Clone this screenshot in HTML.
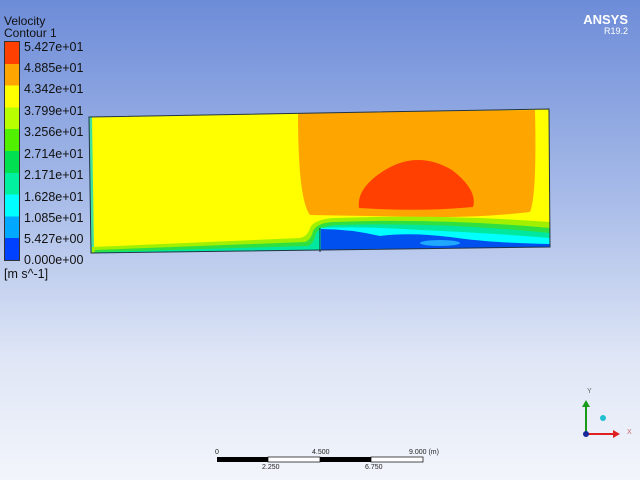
<!DOCTYPE html>
<html><head><style>
body{margin:0;width:640px;height:480px;overflow:hidden;background:linear-gradient(#6d8cd8 0%,#a6bae8 40%,#dfe6f6 75%,#f2f5fb 100%);font-family:"Liberation Sans",sans-serif;position:relative}
.t{position:absolute;color:#111;font-size:12px;line-height:12px}
.l{position:absolute;left:24px;font-size:12.5px;color:#111}
</style></head><body>
<div class="t" style="left:4px;top:15px">Velocity</div>
<div class="t" style="left:4px;top:27px">Contour 1</div>
<div style="position:absolute;left:4px;top:41px;width:14px;height:218px;border:1px solid #333;background:linear-gradient(#ff4000 0,#ff4000 10%,#ffa500 10%,#ffa500 20%,#ffff00 20%,#ffff00 30%,#b8ff00 30%,#b8ff00 40%,#50f000 40%,#50f000 50%,#00e050 50%,#00e050 60%,#00f0a0 60%,#00f0a0 70%,#00ffff 70%,#00ffff 80%,#00a8ff 80%,#00a8ff 90%,#0040ff 90%)"></div>
<div class="l" style="top:40px">5.427e+01</div>
<div class="l" style="top:61px">4.885e+01</div>
<div class="l" style="top:82px">4.342e+01</div>
<div class="l" style="top:104px">3.799e+01</div>
<div class="l" style="top:125px">3.256e+01</div>
<div class="l" style="top:147px">2.714e+01</div>
<div class="l" style="top:168px">2.171e+01</div>
<div class="l" style="top:190px">1.628e+01</div>
<div class="l" style="top:211px">1.085e+01</div>
<div class="l" style="top:232px">5.427e+00</div>
<div class="l" style="top:253px">0.000e+00</div>
<div class="t" style="left:4px;top:268px;font-size:12.5px">[m s^-1]</div>
<div style="position:absolute;right:12px;top:12px;color:#fff;font-weight:bold;font-size:13px">ANSYS</div>
<div style="position:absolute;right:12px;top:26px;color:#fff;font-size:9px">R19.2</div>
<svg width="640" height="480" style="position:absolute;left:0;top:0">
<defs><clipPath id="c"><polygon points="89,117 549,109 550,247 91,253"/></clipPath></defs>
<g clip-path="url(#c)">
<polygon points="89,117 549,109 550,247 91,253" fill="#ffff00"/>
<polygon points="89,117 92,117 94,250 91,253" fill="#40e0a0"/>
<path d="M298,113 L535,110 Q537,195 530,212 Q480,218 420,217 L310,215 Q298,200 298,113Z" fill="#ffa500"/>
<path d="M359,208 Q356,188 385,170 Q418,150 452,170 Q478,190 473,207 Q420,212 359,208Z" fill="#ff4000"/>
<path d="M92,247 L300,238 Q308,236 310,228 Q314,219 335,218 Q440,214 550,222 L551,260 L92,260Z" fill="#a0f000"/>
<path d="M95,250 L305,242 Q311,240 313,231 Q318,222 335,222 Q440,218 550,228 L551,260 L92,260Z" fill="#30e040"/>
<path d="M100,252 L308,246 Q314,244 316,233 Q322,225 340,225 Q440,222 550,233 L551,260 L92,260Z" fill="#00e8a0"/>
<path d="M320,228 Q360,226 420,230 Q490,233 550,238 L551,260 L320,260Z" fill="#00ffff"/>
<path d="M321,229 Q350,229 380,236 Q410,232 450,237 Q490,243 550,244 L551,260 L321,260Z" fill="#0050f0"/>
<ellipse cx="440" cy="243" rx="20" ry="3" fill="#20a8ff"/>
</g>
<polygon points="89,117 549,109 550,247 91,253" fill="none" stroke="#234" stroke-width="1"/>
<line x1="320" y1="228" x2="320" y2="252" stroke="#123" stroke-width="1"/>
<rect x="217" y="457" width="51" height="5" fill="#000"/>
<rect x="268" y="457" width="52" height="5" fill="#fff" stroke="#000" stroke-width=".7"/>
<rect x="320" y="457" width="51" height="5" fill="#000"/>
<rect x="371" y="457" width="52" height="5" fill="#fff" stroke="#000" stroke-width=".7"/>
<g font-family="Liberation Sans" font-size="7" fill="#222">
<text x="215" y="454">0</text><text x="312" y="454">4.500</text><text x="409" y="454">9.000  (m)</text>
<text x="262" y="469">2.250</text><text x="365" y="469">6.750</text>
<text x="587" y="393" fill="#666">Y</text><text x="627" y="434" fill="#c66">X</text></g>
<line x1="586" y1="434" x2="586" y2="406" stroke="#1a9a1a" stroke-width="2"/>
<polygon points="582,407 590,407 586,400" fill="#1a9a1a"/>
<line x1="586" y1="434" x2="614" y2="434" stroke="#e02020" stroke-width="2"/>
<polygon points="613,430 620,434 613,438" fill="#e02020"/>
<circle cx="586" cy="434" r="3" fill="#1a2a9a"/>
<circle cx="603" cy="418" r="3" fill="#20c0d0"/>
</svg>
</body></html>
